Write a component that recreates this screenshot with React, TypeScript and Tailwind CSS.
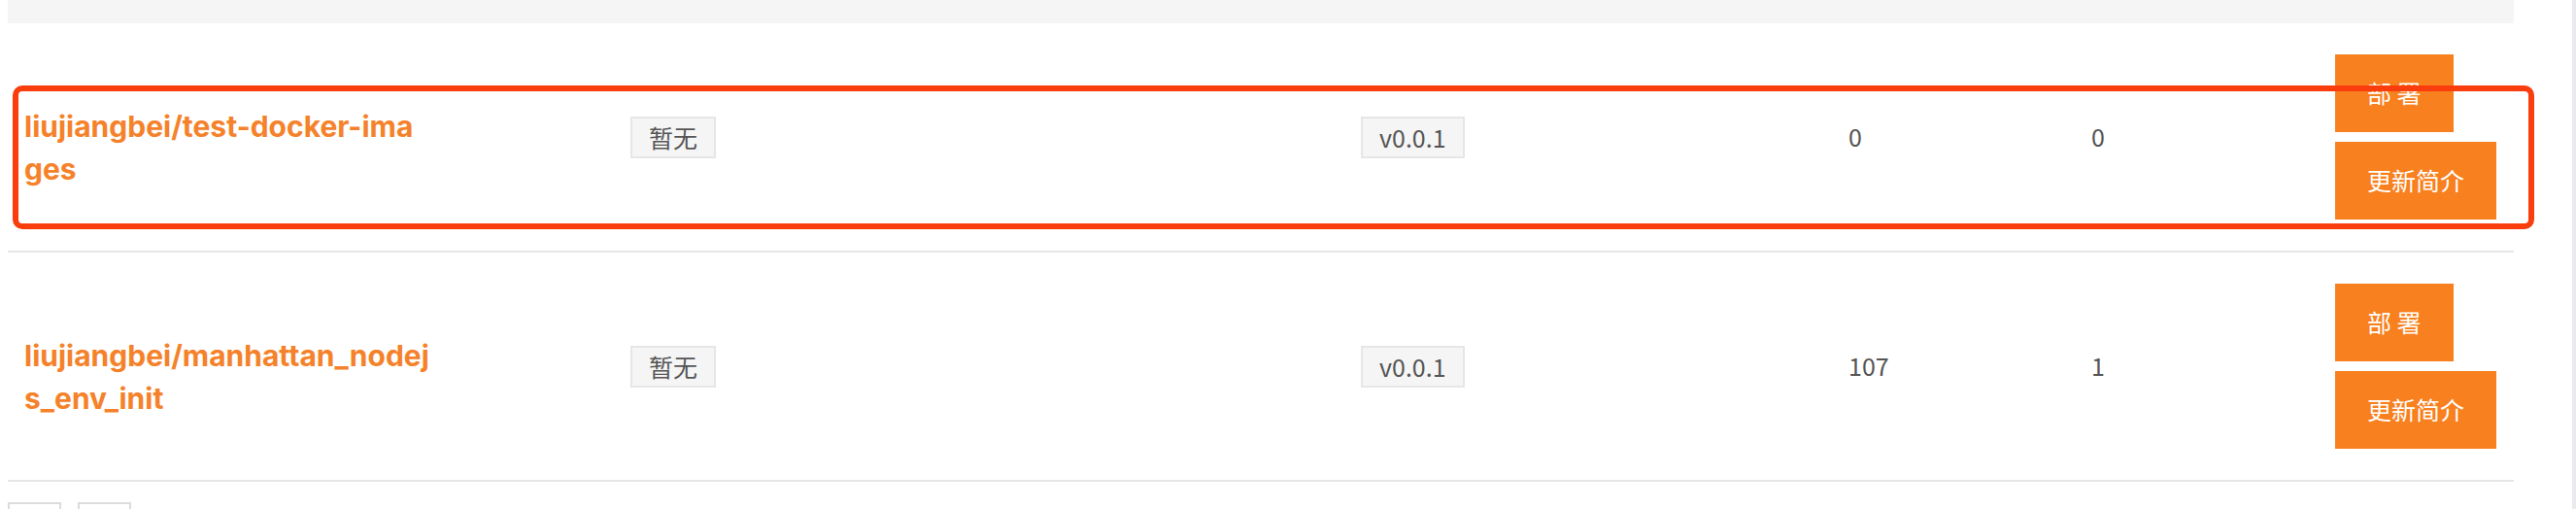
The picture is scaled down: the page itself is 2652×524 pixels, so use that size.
import React from 'react';

interface Repo {
  name: string[];
  intro: string;
  version: string;
  pulls: string;
  stars: string;
}

const repos: Repo[] = [
  { name: ['liujiangbei/test-docker-ima', 'ges'], intro: '暂无', version: 'v0.0.1', pulls: '0', stars: '0' },
  { name: ['liujiangbei/manhattan_nodej', 's_env_init'], intro: '暂无', version: 'v0.0.1', pulls: '107', stars: '1' },
];

const cjk = "font-['Noto_Sans_CJK_SC','Noto_Sans',sans-serif]";

const Tag: React.FC<{ text: string }> = ({ text }) => (
  <span className="inline-block h-[43px] px-[17px] border-2 border-[#e6e6e6] bg-[#f5f5f5] text-[25px] leading-[39px] text-[#555]">
    {text}
  </span>
);

const Row: React.FC<{ repo: Repo }> = ({ repo }) => (
  <div className="grid grid-cols-[641px_752px_502px_250px_251px_184px] items-center py-8 border-b-2 border-[#e6e6e6]">
    <div className="pl-[17px] pt-[22px] font-['Inter','Liberation_Sans',sans-serif] font-bold text-[30px] leading-[44px] text-[#f5822a]">
      {repo.name.map((line) => (
        <div key={line}>{line}</div>
      ))}
    </div>
    <div>
      <Tag text={repo.intro} />
    </div>
    <div>
      <Tag text={repo.version} />
    </div>
    <div className="text-[25px] text-[#555]">{repo.pulls}</div>
    <div className="text-[25px] text-[#555]">{repo.stars}</div>
    <div className="flex flex-col items-start gap-[10px]">
      <button className="h-20 px-[33px] bg-[#f8801e] text-white text-[25px]">部 署</button>
      <button className="h-20 px-[33px] bg-[#f8801e] text-white text-[25px]">更新简介</button>
    </div>
  </div>
);

export default function App() {
  return (
    <div className={`relative flex w-[2652px] h-[524px] overflow-hidden bg-white ${cjk}`}>
      <div className="ml-2 w-[2580px] flex flex-col">
        <div className="h-6 shrink-0 bg-[#f5f5f5]" />
        {repos.map((r) => (
          <Row key={r.name.join('')} repo={r} />
        ))}
        <div className="mt-[21px] flex gap-[17px]">
          <span className="w-[55px] h-10 border-2 border-[#dcdcdc]" />
          <span className="w-[55px] h-10 border-2 border-[#dcdcdc]" />
        </div>
      </div>
      <div className="ml-auto w-1 bg-[#e9e9ee]" />
      {/* highlight annotation */}
      <div className="absolute left-[13px] top-[88px] w-[2596px] h-[148px] border-[6px] border-[#fa3d0c] rounded-[10px] pointer-events-none" />
    </div>
  );
}
